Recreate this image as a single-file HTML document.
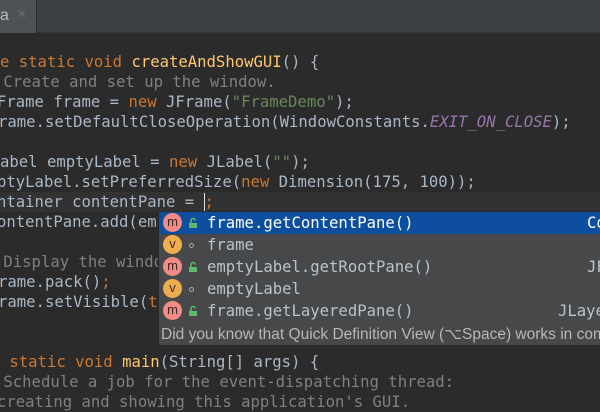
<!DOCTYPE html>
<html><head><meta charset="utf-8"><style>
*{margin:0;padding:0;box-sizing:border-box}
body{width:600px;height:400px;overflow:hidden;background:#2b2b2b;position:relative;font-family:"DejaVu Sans Mono","Liberation Mono",monospace;font-size:15.6px;color:#a9b7c6}
.tabbar{position:absolute;left:0;top:0;width:600px;height:33px;background:#3c3f41;border-bottom:1px solid #323232}
.tab{position:absolute;left:0;top:0;width:37px;height:33px;background:#4e5254;border-right:1px solid #2b2b2b;font-family:"Liberation Sans",sans-serif;font-size:16px;color:#bbb}
.tab span{position:absolute;left:0;top:7px}
.tab i{position:absolute;left:17px;top:6px;font-style:normal;color:#6e6e6e;font-size:16px}
.l{position:absolute;white-space:pre;height:20px;line-height:20px}
.k{color:#cc7832}.f{color:#ffc66d}.c{color:#808080}.s{color:#6a8759}.p{color:#9876aa;font-style:italic}
.cur{position:absolute;left:0;top:192px;width:600px;height:20px;background:#323232}
.pop{position:absolute;left:158px;top:211px;width:442px;height:135px;background:#46484a;border:1px solid #2a2a2a;border-right:none}
.row{position:absolute;left:0;width:442px;height:22px;line-height:22px;white-space:pre}
.sel{background:#0d4f9e}
.ic{position:absolute;left:4px;top:1px;width:19px;height:19px;border-radius:50%;font-size:13px;line-height:18px;text-align:center;color:#3a2a2a;font-family:"Liberation Sans",sans-serif}
.m{background:#f28b86}.v{background:#f0ad4e}
.lk{position:absolute;left:28px;top:5px}
.dot{position:absolute;left:30px;top:9px;width:5px;height:5px;border:1px solid #aaa;border-radius:50%}
.t{position:absolute;left:48px;top:0;color:#bbc2c9}
.r{position:absolute;top:0;color:#bbc2c9}
.foot{position:absolute;left:2px;top:112px;font-family:"Liberation Sans",sans-serif;font-size:15.5px;color:#b8b8b8;white-space:pre;line-height:22px}
</style></head><body>
<div class="tabbar"><div class="tab"><span>a</span><i>×</i></div></div>
<div class="cur"></div>
<div class="l" style="left:0;top:52px"><span class="k">e static void </span><span class="f">createAndShowGUI</span>() {</div>
<div class="l c" style="left:-6px;top:72px"> Create and set up the window.</div>
<div class="l" style="left:-3px;top:92px">Frame frame = <span class="k">new </span>JFrame(<span class="s">"FrameDemo"</span>);</div>
<div class="l" style="left:-2px;top:112px">rame.setDefaultCloseOperation(WindowConstants.<span class="p">EXIT_ON_CLOSE</span>);</div>
<div class="l" style="left:0;top:152px">abel emptyLabel = <span class="k">new </span>JLabel(<span class="s">""</span>);</div>
<div class="l" style="left:-3px;top:172px">ptyLabel.setPreferredSize(<span class="k">new </span>Dimension(175, 100));</div>
<div class="l" style="left:-3px;top:192px">ntainer contentPane = <span style="border-left:1px solid #ddd"></span><span class="k">;</span></div>
<div class="l" style="left:-3px;top:212px">ontentPane.add(emp</div>
<div class="l c" style="left:-6px;top:252px"> Display the windo</div>
<div class="l" style="left:-2px;top:272px">rame.pack()<span class="k">;</span></div>
<div class="l" style="left:-2px;top:292px">rame.setVisible(<span class="k">tr</span></div>
<div class="l" style="left:0;top:352px"> <span class="k">static void </span><span class="f">main</span>(String[] args) {</div>
<div class="l c" style="left:-6px;top:372px"> Schedule a job for the event-dispatching thread:</div>
<div class="l c" style="left:-3px;top:392px">creating and showing this application's GUI.</div>
<div class="pop">
 <div class="row sel" style="top:0"><div class="ic m">m</div><svg class="lk" width="12" height="12"><path d="M2 6h8v5H2z" fill="#5fb96a"/><path d="M4 6V3.5a2 2 0 0 1 4 0" stroke="#5fb96a" stroke-width="1.5" fill="none"/></svg><span class="t" style="color:#fff">frame.getContentPane()</span><span class="r" style="left:428px;color:#fff">Co</span></div>
 <div class="row" style="top:22px"><div class="ic v">v</div><div class="dot"></div><span class="t">frame</span></div>
 <div class="row" style="top:44px"><div class="ic m">m</div><svg class="lk" width="12" height="12"><path d="M2 6h8v5H2z" fill="#5fb96a"/><path d="M4 6V3.5a2 2 0 0 1 4 0" stroke="#5fb96a" stroke-width="1.5" fill="none"/></svg><span class="t">emptyLabel.getRootPane()</span><span class="r" style="left:428px">JF</span></div>
 <div class="row" style="top:66px"><div class="ic v">v</div><div class="dot"></div><span class="t">emptyLabel</span></div>
 <div class="row" style="top:88px"><div class="ic m">m</div><svg class="lk" width="12" height="12"><path d="M2 6h8v5H2z" fill="#5fb96a"/><path d="M4 6V3.5a2 2 0 0 1 4 0" stroke="#5fb96a" stroke-width="1.5" fill="none"/></svg><span class="t">frame.getLayeredPane()</span><span class="r" style="left:399px">JLaye</span></div>
 <div class="foot">Did you know that Quick Definition View (⌥Space) works in com</div>
</div>
</body></html>
